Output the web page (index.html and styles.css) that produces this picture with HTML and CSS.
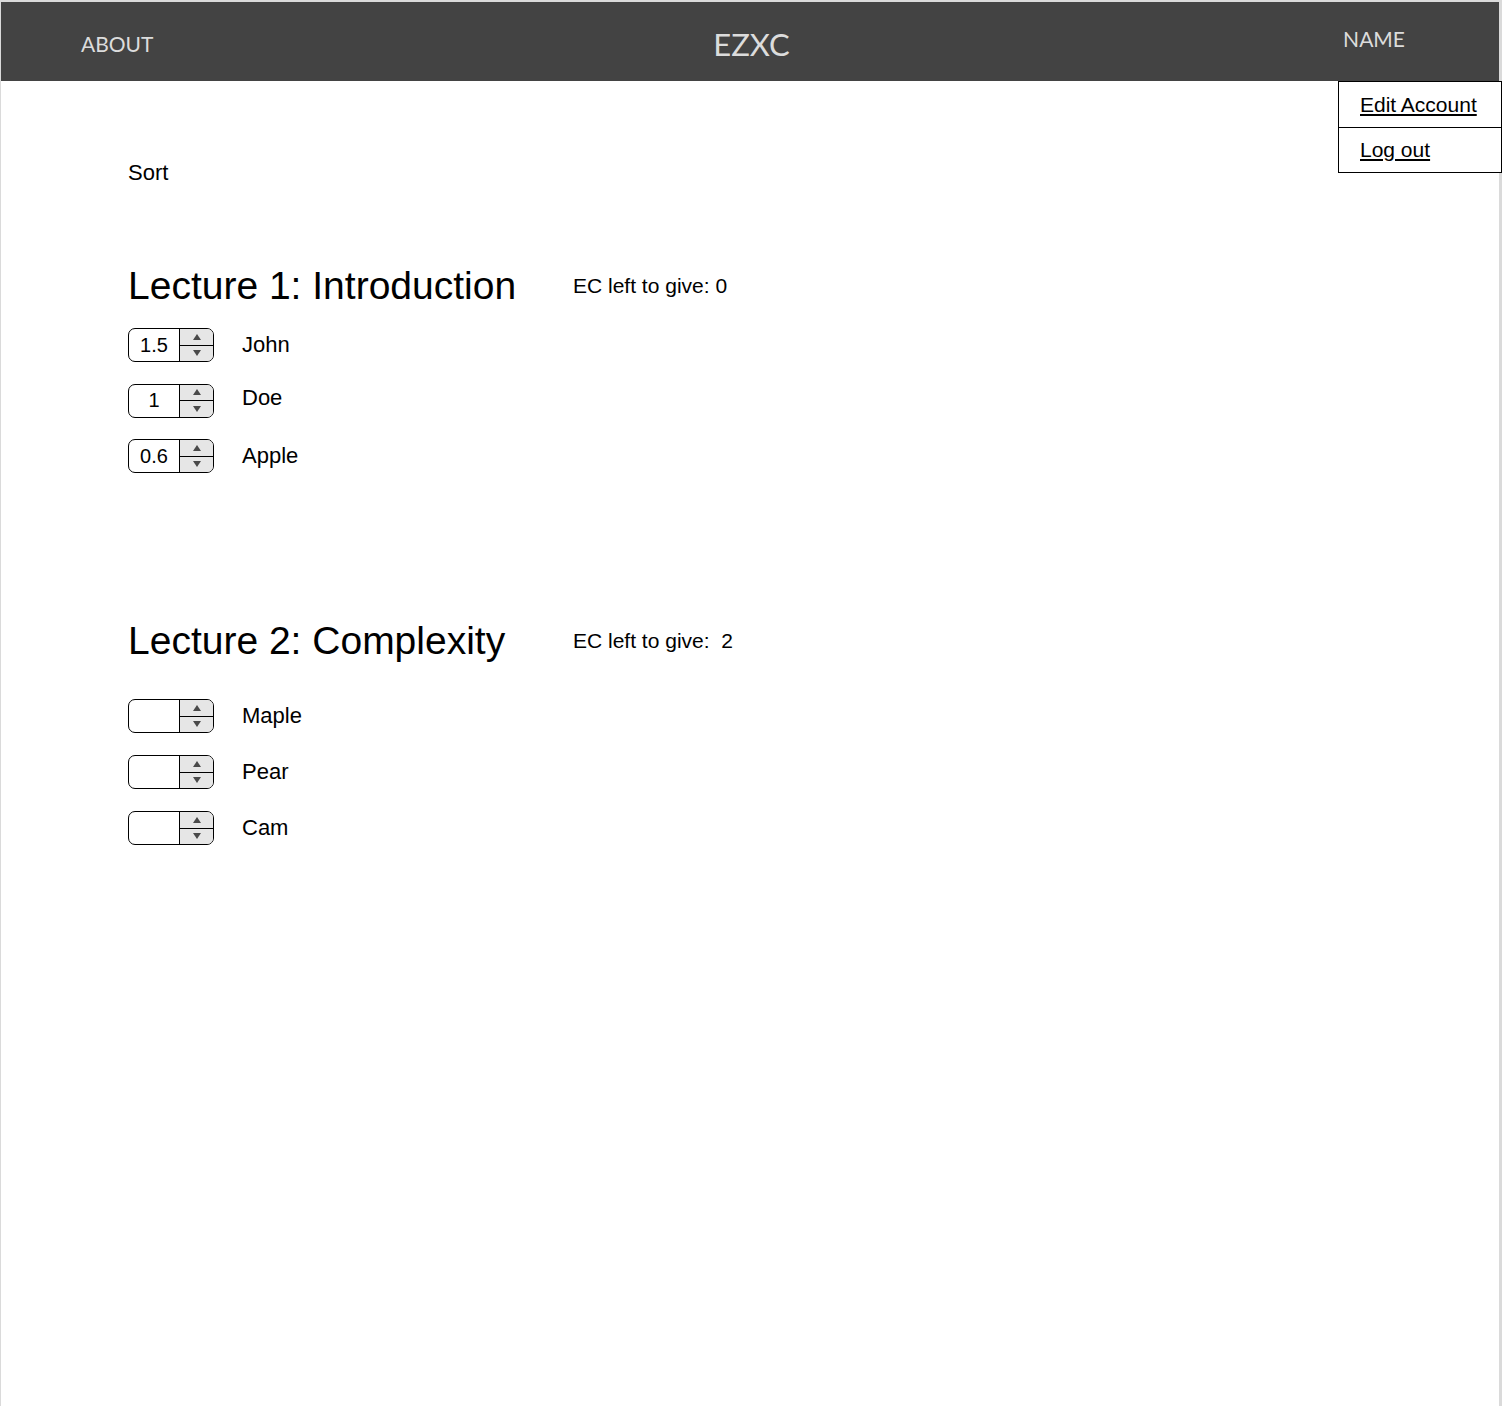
FILE: index.html
```html
<!DOCTYPE html>
<html lang="en">
<head>
  <meta charset="UTF-8" />
  <meta name="viewport" content="width=device-width, initial-scale=1.0"/>
  <title>EZXC</title>
  <link rel="stylesheet" href="styles.css">
</head>
<body>

  <div class="page">
    <header class="topbar">
      <a class="nav-link">ABOUT</a>
      <div class="brand">EZXC</div>
      <a class="nav-link nav-name">NAME</a>

      <ul class="account-menu">
        <li><a href="#">Edit Account</a></li>
        <li><a href="#">Log out</a></li>
      </ul>
    </header>

    <main class="content">
      <div class="sort">Sort</div>

      <section class="lecture">
        <div class="lecture-head">
          <h2>Lecture 1: Introduction</h2>
          <span class="ec-left">EC left to give: 0</span>
        </div>
        <div class="students">
          <div class="student">
            <span class="num"><span class="num-val">1.5</span><span class="spin"><i class="up"></i><i class="down"></i></span></span>
            <span class="student-name">John</span>
          </div>
          <div class="student">
            <span class="num"><span class="num-val">1</span><span class="spin"><i class="up"></i><i class="down"></i></span></span>
            <span class="student-name name-high">Doe</span>
          </div>
          <div class="student">
            <span class="num"><span class="num-val">0.6</span><span class="spin"><i class="up"></i><i class="down"></i></span></span>
            <span class="student-name">Apple</span>
          </div>
        </div>
      </section>

      <section class="lecture lecture-next">
        <div class="lecture-head">
          <h2>Lecture 2: Complexity</h2>
          <span class="ec-left">EC left to give:&nbsp; 2</span>
        </div>
        <div class="students students-spaced">
          <div class="student">
            <span class="num"><span class="num-val"></span><span class="spin"><i class="up"></i><i class="down"></i></span></span>
            <span class="student-name">Maple</span>
          </div>
          <div class="student">
            <span class="num"><span class="num-val"></span><span class="spin"><i class="up"></i><i class="down"></i></span></span>
            <span class="student-name">Pear</span>
          </div>
          <div class="student">
            <span class="num"><span class="num-val"></span><span class="spin"><i class="up"></i><i class="down"></i></span></span>
            <span class="student-name">Cam</span>
          </div>
        </div>
      </section>
    </main>
  </div>

</body>
</html>
```

FILE: styles.css
```css
:root {
  --barra: #434343;
  --texto-barra: #dcdcdc;
  --borda-pagina: #dadada;
  --spin: #e6e6e6;
}

* { box-sizing: border-box; margin: 0; padding: 0; }

body {
  font-family: 'Liberation Sans', Arial, sans-serif;
  color: #000;
  background: #fff;
}

.page {
  min-height: 1406px;
  border-top: 2px solid var(--borda-pagina);
  border-left: 1px solid var(--borda-pagina);
  border-right: 3px solid var(--borda-pagina);
}

.topbar {
  position: relative;
  height: 79px;
  background: var(--barra);
  display: grid;
  grid-template-columns: 1fr auto 1fr;
  align-items: center;
  padding: 0 80px;
  font-family: Lato, 'Open Sans', sans-serif;
  color: var(--texto-barra);
}

.nav-link {
  font-size: 21px;
  padding-top: 4px;
}

.nav-name {
  justify-self: end;
  margin-right: 14px;
  padding-top: 0;
  padding-bottom: 6px;
}

.brand {
  font-size: 31px;
  padding-top: 4px;
  padding-left: 3px;
}

.account-menu {
  position: absolute;
  top: 79px;
  right: -3px;
  width: 164px;
  list-style: none;
  background: #fff;
  border: 1px solid #000;
  font-family: 'Liberation Sans', Arial, sans-serif;
  z-index: 10;
}

.account-menu li {
  height: 45px;
  display: flex;
  align-items: center;
  padding-left: 21px;
}

.account-menu li + li {
  border-top: 1px solid #000;
}

.account-menu a {
  color: #000;
  font-size: 21px;
  text-decoration: underline;
}

.content {
  padding-left: 127px;
}

.sort {
  margin-top: 79px;
  font-size: 22px;
  line-height: 26px;
}

.lecture {
  margin-top: 77px;
}

.lecture-next {
  margin-top: 145px;
}

.lecture-head {
  display: grid;
  grid-template-columns: 445px auto;
  align-items: center;
}

.lecture-head h2 {
  font-size: 39px;
  font-weight: normal;
  line-height: 46px;
}

.ec-left {
  font-size: 21px;
}

.students {
  margin-top: 19px;
  display: flex;
  flex-direction: column;
  gap: 21.5px;
}

.students-spaced {
  margin-top: 35px;
  gap: 22px;
}

.student {
  display: flex;
  align-items: center;
  gap: 28px;
}

.student-name {
  font-size: 22px;
}

.name-high {
  position: relative;
  top: -3px;
}

.num {
  display: flex;
  width: 86px;
  height: 34px;
  border: 1.5px solid #000;
  border-radius: 7px;
  overflow: hidden;
}

.num-val {
  flex: 1;
  display: flex;
  align-items: center;
  justify-content: center;
  font-size: 20px;
}

.spin {
  width: 34px;
  display: flex;
  flex-direction: column;
  background: var(--spin);
  border-left: 1.5px solid #000;
}

.spin i {
  flex: 1;
  display: flex;
  align-items: center;
  justify-content: center;
}

.spin i + i {
  border-top: 1px solid #000;
}

.up::before,
.down::before {
  content: '';
  border-left: 4.5px solid transparent;
  border-right: 4.5px solid transparent;
}

.up::before {
  border-bottom: 6px solid #4a4a4a;
}

.down::before {
  border-top: 6px solid #4a4a4a;
}
```
